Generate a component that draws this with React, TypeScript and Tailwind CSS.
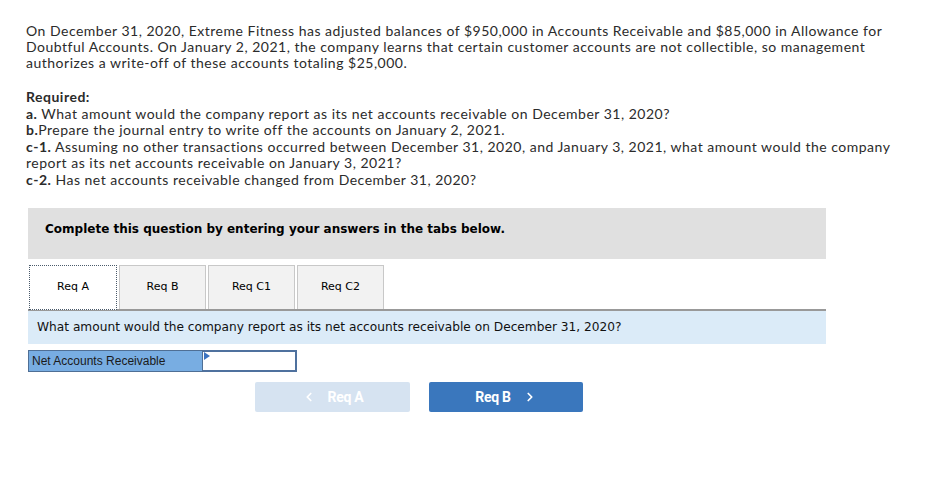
import { ChevronLeft, ChevronRight } from "lucide-react";

const tabs = ["Req A", "Req B", "Req C1", "Req C2"];

export default function App() {
  return (
    <div className="min-h-[483px] w-[950px] bg-white pt-[23px] text-[#2b2b2b]">
      {/* Problem text */}
      <div className="px-[26px] font-['Lato',sans-serif] text-[14px] leading-[16px] tracking-[0.5px]">
        <p className="whitespace-nowrap">
          On December 31, 2020, Extreme Fitness has adjusted balances of $950,000 in Accounts Receivable and $85,000 in Allowance for
          <br />
          Doubtful Accounts. On January 2, 2021, the company learns that certain customer accounts are not collectible, so management
          <br />
          authorizes a write-off of these accounts totaling $25,000.
        </p>
        <div className="mt-[18px] whitespace-nowrap leading-[16.5px]">
          <p className="font-bold">Required:</p>
          <p><b>a.</b> What amount would the company report as its net accounts receivable on December 31, 2020?</p>
          <p><b>b.</b>Prepare the journal entry to write off the accounts on January 2, 2021.</p>
          <p>
            <b>c-1.</b> Assuming no other transactions occurred between December 31, 2020, and January 3, 2021, what amount would the company
            <br />
            report as its net accounts receivable on January 3, 2021?
          </p>
          <p><b>c-2.</b> Has net accounts receivable changed from December 31, 2020?</p>
        </div>
      </div>

      <div className="ml-[28px] mt-[20px] w-[798px] font-['DejaVu_Sans',sans-serif]">
        {/* Instruction banner */}
        <div className="h-[51px] bg-[#e0e0e0] px-[17px] pt-[12px] text-[12px] font-bold text-black">
          Complete this question by entering your answers in the tabs below.
        </div>

        {/* Tabs */}
        <div className="mt-[6px] flex gap-[2px] border-b-2 border-[#999] pl-px">
          {tabs.map((t, i) => (
            <div
              key={t}
              className={
                i === 0
                  ? "-mb-[2px] flex h-[45px] w-[88px] items-center justify-center border border-dotted border-[#4a5a6a] bg-white text-[11px] text-black"
                  : "flex h-[44px] w-[87px] items-center justify-center border border-b-0 border-[#c8c8c8] bg-[#f2f2f2] text-[11px] text-black"
              }
            >
              {t}
            </div>
          ))}
        </div>

        {/* Question */}
        <div className="flex h-[33px] items-center bg-[#dbebf8] px-[9px] text-[12.2px] text-[#111]">
          What amount would the company report as its net accounts receivable on December 31, 2020?
        </div>

        {/* Answer row */}
        <div className="mt-[6px] flex h-[22px]">
          <div className="flex w-[175px] items-center border border-[#4f6f95] bg-[#78ade2] pl-[3px] font-['Liberation_Sans',sans-serif] text-[12px] text-[#1a1a1a]">
            Net Accounts Receivable
          </div>
          <div className="relative w-[94px] border-2 border-l-0 border-[#4f719e] bg-white">
            <span className="absolute left-px top-0 h-0 w-0 border-l-[6px] border-t-[4px] border-b-[4px] border-l-[#3b73c0] border-t-transparent border-b-transparent" />
          </div>
        </div>

        {/* Nav buttons */}
        <div className="mt-[10px] flex gap-[19px] pl-[227px] font-['Roboto',sans-serif] text-[14px] font-bold">
          <button className="flex h-[30px] w-[155px] items-center justify-center gap-[12px] rounded-[2px] bg-[#d6e3f1] text-white">
            <ChevronLeft size={14} strokeWidth={3} />
            <span className="tracking-[-0.3px]">Req A</span>
          </button>
          <button className="flex h-[30px] w-[154px] items-center justify-center gap-[12px] rounded-[2px] bg-[#3a77bd] text-white">
            <span className="tracking-[-0.3px]">Req B</span>
            <ChevronRight size={14} strokeWidth={3} />
          </button>
        </div>
      </div>
    </div>
  );
}
